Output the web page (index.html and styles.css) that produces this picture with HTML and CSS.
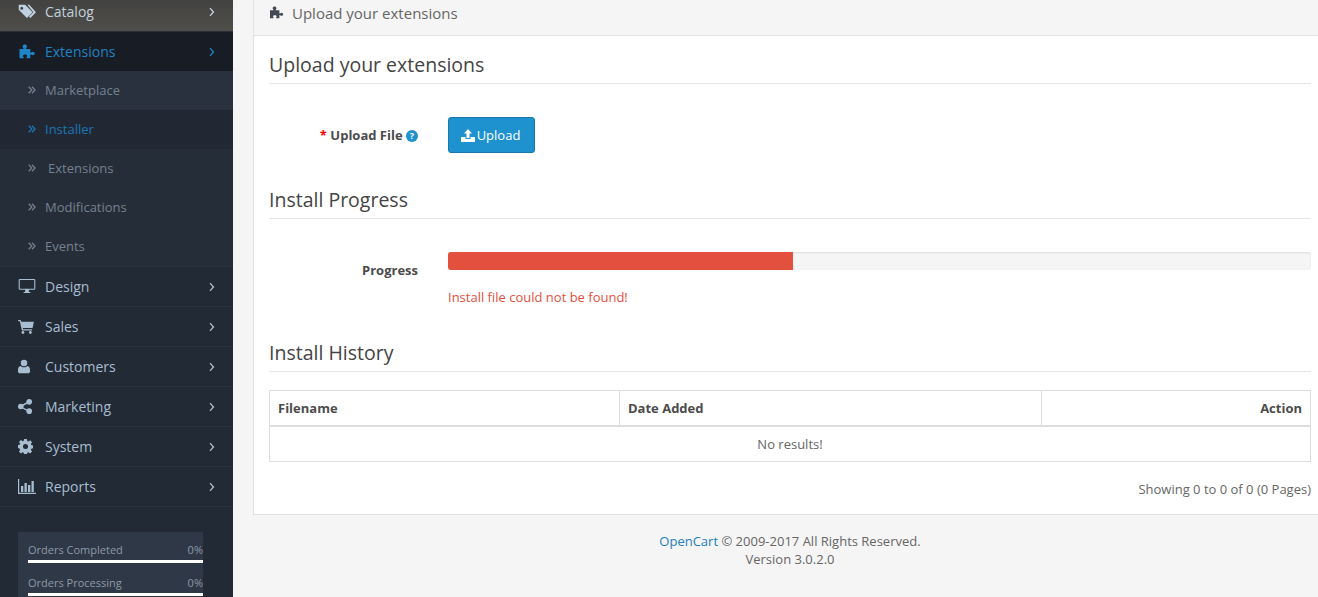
FILE: index.html
```html
<!DOCTYPE html>
<html lang="en">
<head>
<meta charset="utf-8">
<title>Installer</title>
<link rel="stylesheet" href="styles.css">
</head>
<body>
<svg class="defs" width="0" height="0" aria-hidden="true">
  <symbol id="i-tags" viewBox="0 0 24 20"><path d="M1 1h8.500l10 10-7.500 7.500-11-11zM5 3.500a2 2 0 1 0 0 4 2 2 0 0 0 0-4z" fill-rule="evenodd"/><path d="M12.500 1h2.500l9 10-7.500 7.500-1.800-1.800 5.700-5.700z"/></symbol>
  <symbol id="i-puzzle" viewBox="0 0 20 18"><path d="M1 6h4.300c.6 0 .7-.5.3-1-.7-.8-.9-1.300-.9-2C4.700 1.500 6 .7 7.300.7s2.600.8 2.600 2.300c0 .7-.2 1.200-.9 2-.4.500-.3 1 .3 1H14v4c0 .6.500.7 1 .3.800-.7 1.300-.9 2-.9 1.500 0 2.300 1.100 2.300 2.100S18.500 13.600 17 13.600c-.7 0-1.200-.2-2-.9-.5-.4-1-.3-1 .3v4H9.800c-.6 0-.7-.5-.3-1 .5-.6.700-1.100.7-1.600 0-1-.9-1.700-2.500-1.700s-2.500.7-2.500 1.700c0 .5.200 1 .7 1.600.4.500.3 1-.3 1H1z"/></symbol>
  <symbol id="i-desktop" viewBox="0 0 20 18"><path d="M1.500 0h17A1.500 1.500 0 0 1 20 1.500v10a1.500 1.500 0 0 1-1.500 1.500H12l.5 2.500h1.500v1.300H6v-1.300h1.500L8 13H1.500A1.500 1.500 0 0 1 0 11.500v-10A1.500 1.500 0 0 1 1.500 0zM1.300 1.300v10.400h17.400V1.300z" fill-rule="evenodd"/></symbol>
  <symbol id="i-cart" viewBox="0 0 18 16"><path d="M0 0h2.900l.6 2H18l-1.500 7H5.300l.3 1.500H16V12H4.300L2 1.500H0z"/><circle cx="5.500" cy="14.300" r="1.600"/><circle cx="14" cy="14.300" r="1.600"/></symbol>
  <symbol id="i-user" viewBox="0 0 14 16"><circle cx="7" cy="4" r="3.800"/><path d="M3 7.500c1 1 2.500 1.500 4 1.500s3-.5 4-1.500c2 .2 3 2 3 5v1c0 1.500-1 2.500-2.500 2.500h-9C1 16 0 15 0 13.500v-1c0-3 1-4.800 3-5z"/></symbol>
  <symbol id="i-share" viewBox="0 0 15 16"><circle cx="12" cy="3" r="3"/><circle cx="3" cy="8" r="3"/><circle cx="12" cy="13" r="3"/><path d="M3 7l8.500-4.800.8 1.400L4 8.300l8.300 4.200-.7 1.400L3 9z"/></symbol>
  <symbol id="i-cog" viewBox="0 0 16 16"><path fill-rule="evenodd" d="M6.500 0h3l.4 2.200 1.100.5 1.900-1.300 2.100 2.100-1.300 1.900.5 1.100 2.200.4v3l-2.200.4-.5 1.100 1.300 1.900-2.100 2.100-1.900-1.300-1.100.5-.4 2.200h-3l-.4-2.200-1.100-.5-1.900 1.300-2.100-2.100 1.300-1.900-.5-1.100L-.4 9.600v-3l2.200-.4.500-1.100L1 3.200 3.100 1.100 5 2.400l1.100-.5zM8 5.300a2.700 2.700 0 1 0 0 5.400 2.700 2.700 0 0 0 0-5.400z"/></symbol>
  <symbol id="i-chart" viewBox="0 0 18 15"><path d="M0 0h1.200v13.800H18V15H0z"/><path d="M3 7h2.300v6H3zM6.500 4h2.300v9H6.500zM10 6h2.300v7H10zM13.500 2h2.300v11h-2.300z"/></symbol>
  <symbol id="i-upload" viewBox="0 0 14 13"><path d="M7 0l4 4.500H8.500V9h-3V4.500H3z"/><path d="M0 8h4.500v2h5V8H14v5H0z"/></symbol>
  <symbol id="i-dbl" viewBox="0 0 9 9"><path d="M.8.800l3.500 3.700L.8 8.200M4.500.800L8 4.500 4.500 8.200" fill="none" stroke="currentColor" stroke-width="1.400"/></symbol>
  <symbol id="i-angle" viewBox="0 0 7 11"><path d="M1.200 1l4 4.500-4 4.500" fill="none" stroke="currentColor" stroke-width="1.600"/></symbol>
</svg>

<div class="app">
  <nav class="sidebar">
    <ul class="menu">
      <li class="item item-hover"><a class="row"><svg class="ico ico-tags"><use href="#i-tags"/></svg><span class="label">Catalog</span><svg class="arrow"><use href="#i-angle"/></svg></a></li>
      <li class="item item-open">
        <a class="row"><svg class="ico ico-puzzle"><use href="#i-puzzle"/></svg><span class="label">Extensions</span><svg class="arrow"><use href="#i-angle"/></svg></a>
        <ul class="sub">
          <li class="subrow subrow-first"><svg class="dbl"><use href="#i-dbl"/></svg><span>Marketplace</span></li>
          <li class="subrow subrow-active"><svg class="dbl"><use href="#i-dbl"/></svg><span>Installer</span></li>
          <li class="subrow"><svg class="dbl"><use href="#i-dbl"/></svg><span class="nudge">Extensions</span></li>
          <li class="subrow"><svg class="dbl"><use href="#i-dbl"/></svg><span>Modifications</span></li>
          <li class="subrow"><svg class="dbl"><use href="#i-dbl"/></svg><span>Events</span></li>
        </ul>
      </li>
      <li class="item"><a class="row"><svg class="ico ico-desktop"><use href="#i-desktop"/></svg><span class="label">Design</span><svg class="arrow"><use href="#i-angle"/></svg></a></li>
      <li class="item"><a class="row"><svg class="ico ico-cart"><use href="#i-cart"/></svg><span class="label">Sales</span><svg class="arrow"><use href="#i-angle"/></svg></a></li>
      <li class="item"><a class="row"><svg class="ico ico-user"><use href="#i-user"/></svg><span class="label">Customers</span><svg class="arrow"><use href="#i-angle"/></svg></a></li>
      <li class="item"><a class="row"><svg class="ico ico-share"><use href="#i-share"/></svg><span class="label">Marketing</span><svg class="arrow"><use href="#i-angle"/></svg></a></li>
      <li class="item"><a class="row"><svg class="ico ico-cog"><use href="#i-cog"/></svg><span class="label">System</span><svg class="arrow"><use href="#i-angle"/></svg></a></li>
      <li class="item"><a class="row"><svg class="ico ico-chart"><use href="#i-chart"/></svg><span class="label">Reports</span><svg class="arrow"><use href="#i-angle"/></svg></a></li>
    </ul>
    <div class="stats">
      <div class="stat-head"><span>Orders Completed</span><span>0%</span></div>
      <div class="stat-bar"></div>
      <div class="stat-head"><span>Orders Processing</span><span>0%</span></div>
      <div class="stat-bar"></div>
    </div>
  </nav>

  <main class="content">
    <section class="panel">
      <header class="panel-heading"><svg class="head-ico"><use href="#i-puzzle"/></svg><span>Upload your extensions</span></header>
      <div class="panel-body">
        <h2 class="legend">Upload your extensions</h2>
        <div class="form-row form-upload">
          <div class="form-label"><span class="req">*</span> <b>Upload File</b> <span class="help">?</span></div>
          <button class="btn" type="button"><svg class="btn-ico"><use href="#i-upload"/></svg>Upload</button>
        </div>
        <h2 class="legend">Install Progress</h2>
        <div class="form-row form-progress">
          <div class="form-label"><b>Progress</b></div>
          <div class="progress-col">
            <div class="progress"><div class="progress-fill" style="width:345px"></div></div>
            <div class="error">Install file could not be found!</div>
          </div>
        </div>
        <h2 class="legend">Install History</h2>
        <table class="table">
          <thead>
            <tr><th class="c1">Filename</th><th class="c2">Date Added</th><th class="c3">Action</th></tr>
          </thead>
          <tbody>
            <tr><td colspan="3">No results!</td></tr>
          </tbody>
        </table>
        <div class="pages">Showing 0 to 0 of 0 (0 Pages)</div>
      </div>
    </section>
    <footer class="footer"><a>OpenCart</a> © 2009-2017 All Rights Reserved.<br>Version 3.0.2.0</footer>
  </main>
</div>
</body>
</html>
```
FILE: styles.css
```css
* { box-sizing: border-box; }
html, body { margin: 0; height: 597px; overflow: hidden; }
body { font-family: "Open Sans", sans-serif; font-size: 13px; color: #666; background: #f5f5f5; }
.defs { display: block; height: 0; }
ul { list-style: none; margin: 0; padding: 0; }

.app { display: flex; height: 597px; overflow: hidden; }

/* Sidebar */
.sidebar { flex: 0 0 233px; background: #222a35; color: #9fb1c4; margin-top: -8px; height: 620px; }
.item { border-bottom: 1px solid #2a323e; }
.row { display: flex; align-items: center; height: 39px; padding-left: 18px; font-size: 14px; color: #a9bdd0; fill: #a9bdd0; }
.ico { flex: none; width: 18px; height: 16px; }
.ico-tags { width: 18px; height: 15px; }
.ico-puzzle { width: 18px; height: 15px; }
.ico-desktop { width: 18px; height: 15px; }
.ico-cart { width: 16px; height: 14px; margin-right: 2px; }
.ico-user { width: 12px; height: 15px; margin-right: 6px; }
.ico-share { width: 14px; height: 15px; margin-right: 4px; }
.ico-cog { width: 15px; height: 15px; margin-right: 3px; }
.ico-chart { width: 18px; height: 15px; }
.label { margin-left: 9px; flex: 1; }
.arrow { flex: none; width: 6px; height: 10px; margin-right: 18px; }

.item-hover { background: linear-gradient(#3f3f3e, #4f4e4a); border-bottom: 1px solid #2a2f38; }
.item-hover .row { color: #c2d0dc; fill: #bfd0e0; }
.item-open > .row { background: #181c24; color: #1e84c6; fill: #1e84c6; }

.sub { background: #29313e; }
.subrow { display: flex; align-items: center; height: 39px; padding: 0 0 2px 28px; font-size: 13px; color: #76818e; }
.subrow-first { background: #29313f; }
.subrow:nth-child(n+3) { background: #252d39; }
.subrow-active { background: #222833; color: #1b76b6; }
.dbl { flex: none; width: 8px; height: 8px; margin-right: 9px; }
.nudge { margin-left: 3px; }

.stats { margin: 25px 0 0 18px; width: 185px; height: 90px; background: #2e3846; padding: 10px 0 0 10px; color: #8d9aa8; font-size: 11px; }
.stat-head { display: flex; justify-content: space-between; width: 175px; height: 15px; line-height: 15px; }
.stat-bar { width: 175px; height: 3px; background: #fff; margin: 3px 0 12px; }

/* Main */
.content { flex: 1; min-width: 0; display: flex; flex-direction: column; padding-left: 20px; }
.panel { background: #fff; border: 1px solid #e0e0e0; border-top: 0; border-right: 0; height: 515px; flex: none; }
.panel-heading { display: flex; align-items: center; height: 36px; padding: 0 0 10px 15px; background: #f5f5f5; border-bottom: 1px solid #e2e2e2; font-size: 15px; color: #666; fill: #454a52; }
.head-ico { width: 15px; height: 13px; margin-right: 8px; flex: none; }
.panel-body { padding: 0 7px 0 15px; }
.legend { margin: 0; height: 48px; padding-top: 14px; font-size: 19.500px; font-weight: 400; line-height: 30px; color: #444; border-bottom: 1px solid #e5e5e5; }
.form-row { display: flex; }
.form-upload { height: 87px; padding-top: 33px; }
.form-progress { height: 105px; padding-top: 33px; }
.form-label { width: 149px; text-align: right; height: 36px; line-height: 37px; font-size: 13px; color: #4c4c4c; }
.req { color: #f00; font-weight: 700; }
.help { display: inline-block; width: 12px; height: 12px; border-radius: 50%; background: #1e91cf; color: #fff; font-size: 9px; font-weight: 700; line-height: 12px; text-align: center; vertical-align: 1px; }
.btn { margin-left: 30px; width: 87px; height: 36px; padding: 0 2px 0 0; background: #1e91cf; border: 1px solid #1978ab; border-radius: 3px; color: #fff; fill: #fff; font: 13px "Open Sans", sans-serif; display: flex; align-items: center; justify-content: center; }
.btn-ico { width: 14px; height: 13px; margin-right: 2px; }
.progress-col { margin-left: 30px; flex: 1; }
.progress { height: 18px; background: #f5f5f5; border-radius: 3px; box-shadow: inset 0 1px 2px rgba(0,0,0,.1); overflow: hidden; }
.progress-fill { height: 18px; background: #e3503e; }
.error { margin-top: 19px; color: #e3503e; font-size: 13px; line-height: 17px; }

.table { width: 100%; border-collapse: collapse; table-layout: fixed; margin-top: 18px; color: #666; }
.table th, .table td { border: 1px solid #ddd; }
.table th { height: 35px; padding: 0 8px; border-bottom: 2px solid #ddd; text-align: left; color: #4c4c4c; font-weight: 700; font-size: 13px; }
.c1 { width: 350px; }
.c2 { width: 422px; }
.table .c3 { text-align: right; }
.table td { height: 36px; text-align: center; color: #666; font-size: 13px; }
.pages { text-align: right; margin-top: 18px; line-height: 18px; font-size: 13px; white-space: nowrap; }

.footer { text-align: center; margin-top: 17px; font-size: 13px; line-height: 18px; color: #666; padding-left: 9px; }
.footer a { color: #1e7fbe; }
```
